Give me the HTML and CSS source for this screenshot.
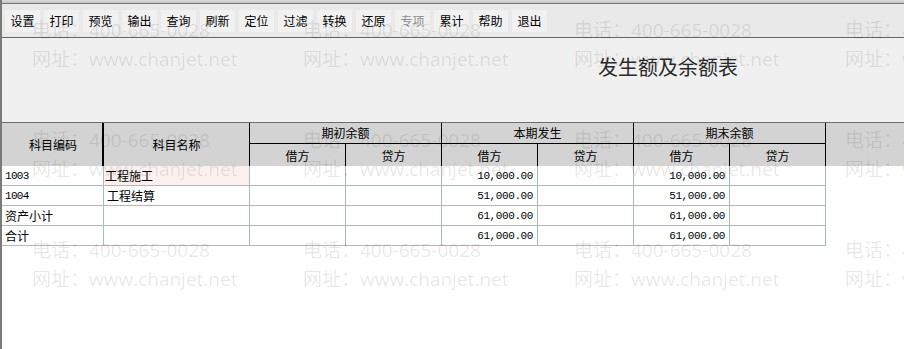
FILE: index.html
```html
<!DOCTYPE html>
<html lang="zh-CN">
<head>
    <meta charset="UTF-8">
    <title>发生额及余额表</title>
    <link rel="stylesheet" href="styles.css">
</head>
<body>
    <div class="window">
        <div class="frame-top"></div>
        <div class="toolbar">
            <span class="btn">设置</span>
            <span class="btn">打印</span>
            <span class="btn">预览</span>
            <span class="btn">输出</span>
            <span class="btn">查询</span>
            <span class="btn">刷新</span>
            <span class="btn">定位</span>
            <span class="btn">过滤</span>
            <span class="btn">转换</span>
            <span class="btn">还原</span>
            <span class="btn disabled">专项</span>
            <span class="btn">累计</span>
            <span class="btn">帮助</span>
            <span class="btn">退出</span>
        </div>
        <div class="caption">
            <h1>发生额及余额表</h1>
        </div>
        <div class="grid">
            <table class="report">
                <colgroup>
                    <col class="c-code">
                    <col class="c-name">
                    <col class="c-num"><col class="c-num">
                    <col class="c-num"><col class="c-num">
                    <col class="c-num"><col class="c-num">
                </colgroup>
                <thead>
                    <tr>
                        <th rowspan="2" class="code">科目编码</th>
                        <th rowspan="2" class="name">科目名称</th>
                        <th colspan="2" class="group">期初余额</th>
                        <th colspan="2" class="group">本期发生</th>
                        <th colspan="2" class="group">期末余额</th>
                    </tr>
                    <tr class="sub">
                        <th>借方</th><th>贷方</th>
                        <th>借方</th><th>贷方</th>
                        <th>借方</th><th>贷方</th>
                    </tr>
                </thead>
                <tbody>
                    <tr>
                        <td class="mono">1003</td>
                        <td class="hl">工程施工</td>
                        <td></td><td></td>
                        <td class="amt">10,000.00</td><td></td>
                        <td class="amt">10,000.00</td><td></td>
                    </tr>
                    <tr>
                        <td class="mono">1004</td>
                        <td>工程结算</td>
                        <td></td><td></td>
                        <td class="amt">51,000.00</td><td></td>
                        <td class="amt">51,000.00</td><td></td>
                    </tr>
                    <tr>
                        <td>资产小计</td>
                        <td></td>
                        <td></td><td></td>
                        <td class="amt">61,000.00</td><td></td>
                        <td class="amt">61,000.00</td><td></td>
                    </tr>
                    <tr>
                        <td>合计</td>
                        <td></td>
                        <td></td><td></td>
                        <td class="amt">61,000.00</td><td></td>
                        <td class="amt">61,000.00</td><td></td>
                    </tr>
                </tbody>
            </table>
        </div>

        <!-- 水印 -->
        <div class="watermark">
            <div class="wm"><p>电话：400-665-0028</p><p>网址：www.chanjet.net</p></div>
            <div class="wm"><p>电话：400-665-0028</p><p>网址：www.chanjet.net</p></div>
            <div class="wm"><p>电话：400-665-0028</p><p>网址：www.chanjet.net</p></div>
            <div class="wm"><p>电话：400-665-0028</p><p>网址：www.chanjet.net</p></div>
            <div class="wm"><p>电话：400-665-0028</p><p>网址：www.chanjet.net</p></div>
            <div class="wm"><p>电话：400-665-0028</p><p>网址：www.chanjet.net</p></div>
            <div class="wm"><p>电话：400-665-0028</p><p>网址：www.chanjet.net</p></div>
            <div class="wm"><p>电话：400-665-0028</p><p>网址：www.chanjet.net</p></div>
            <div class="wm"><p>电话：400-665-0028</p><p>网址：www.chanjet.net</p></div>
            <div class="wm"><p>电话：400-665-0028</p><p>网址：www.chanjet.net</p></div>
            <div class="wm"><p>电话：400-665-0028</p><p>网址：www.chanjet.net</p></div>
            <div class="wm"><p>电话：400-665-0028</p><p>网址：www.chanjet.net</p></div>
        </div>
    </div>
</body>
</html>
```

FILE: styles.css
```css
*{
    margin: 0;
    padding: 0;
    box-sizing: border-box;
}
html,body{
    width: 100%;
    height: 100%;
}
body{
    background: #fff;
    font-family: "Noto Sans CJK SC", "Liberation Sans", sans-serif;
    font-size: 12px;
    color: #000;
}

.window{
    position: relative;
    height: 100%;
    display: flex;
    flex-direction: column;
    border-left: 2px solid #7a7a7a;
    overflow: hidden;
}
.frame-top{
    height: 4px;
    background: linear-gradient(#dcdcdc, #c4c4c4);
    border-bottom: 1px solid #777;
}

/* 工具栏 */
.toolbar{
    height: 34px;
    display: flex;
    align-items: center;
    gap: 4px;
    padding: 0 0 0 3px;
    background: #e9e9e9;
    border-bottom: 1px solid #666;
}
.toolbar .btn{
    width: 35px;
    height: 22px;
    line-height: 22px;
    text-align: center;
    background: #f1f1f1;
    color: #000;
}
.toolbar .btn.disabled{
    color: #8c8c8c;
}

/* 标题 */
.caption{
    height: 84px;
    background: #f0f0f0;
    padding: 15px 0 0 596px;
}
.caption h1{
    font-size: 20px;
    font-weight: 400;
    line-height: 28px;
    color: #2a2a2a;
}

/* 表格 */
.grid{
    flex: 1;
    border-top: 1px solid #6e6e6e;
    background: linear-gradient(#d3d3d3 43px, #fff 43px);
}
.report{
    table-layout: fixed;
    border-collapse: separate;
    border-spacing: 0;
    width: 824px;
}
.c-code{ width: 102px; }
.c-name{ width: 146px; }
.c-num{ width: 96px; }

.report th{
    font-weight: 400;
    text-align: center;
    height: 21px;
    line-height: 18px;
    border-right: 1px solid #000;
}
.report th.code{
    border-right: 2px solid #000;
    padding-left: 2px;
}
.report th.group{
    border-bottom: 1px solid #000;
}
.report tr.sub th{
    height: 22px;
    padding-top: 2px;
}

.report td{
    height: 20px;
    line-height: 18px;
    padding: 1px 3px 0 3px;
    border-right: 1px solid #a8bcbb;
    border-bottom: 1px solid #a8bcbb;
    background: #fff;
    white-space: nowrap;
}
.report td.hl{
    background: #fcf0ef;
    padding-left: 1px;
}
.report td.mono{
    font-family: "Liberation Mono", monospace;
    font-size: 11px;
    letter-spacing: -0.7px;
}
.report td.amt{
    text-align: right;
    font-family: "Liberation Mono", monospace;
    font-size: 11px;
    letter-spacing: -0.4px;
    padding-right: 4px;
}

/* 水印 */
.watermark{
    position: absolute;
    top: 0;
    left: 0;
    right: 0;
    bottom: 0;
    pointer-events: none;
    display: grid;
    grid-template-columns: repeat(4, 271px);
    grid-auto-rows: 110px;
    padding: 16px 0 0 30px;
}
.wm p{
    font-family: "Open Sans", "Noto Sans CJK SC", sans-serif;
    font-size: 19px;
    font-weight: 400;
    line-height: 29px;
    color: rgba(0,0,0,0.1);
    white-space: nowrap;
}
```
